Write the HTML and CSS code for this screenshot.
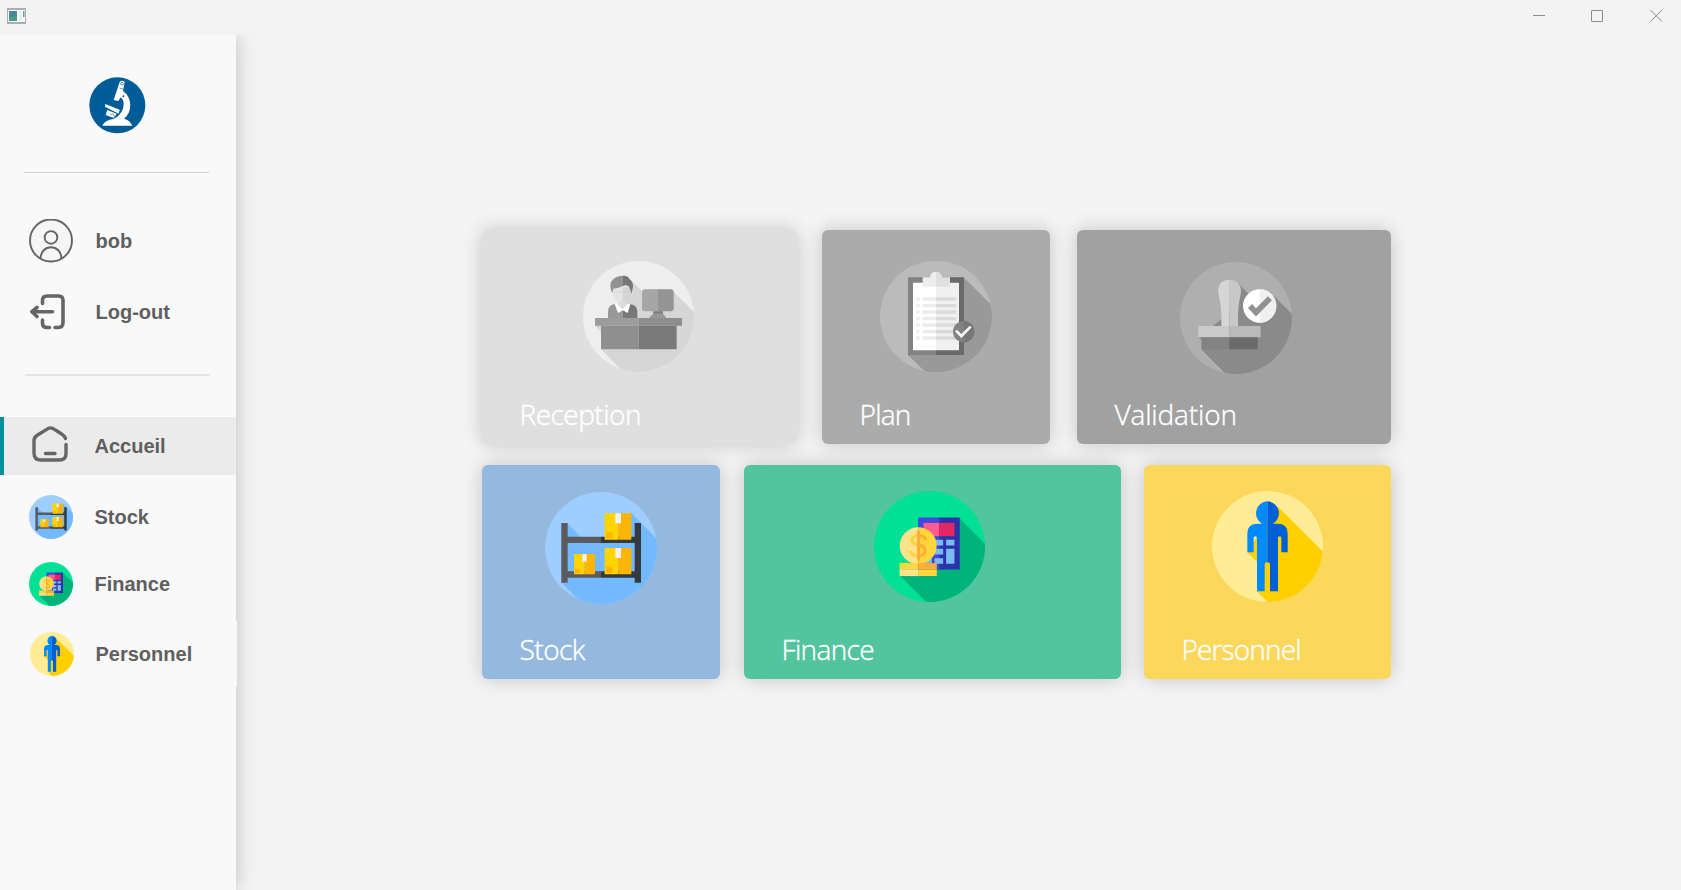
FILE: index.html
```html
<!DOCTYPE html>
<html lang="fr">
<head>
<meta charset="utf-8">
<title>Accueil</title>
<link rel="stylesheet" href="styles.css">
</head>
<body>
<svg class="defs" width="0" height="0">
  <symbol id="stock" viewBox="225 126 336 336">
    <clipPath id="c1"><circle cx="393" cy="294" r="168"/></clipPath>
    <circle cx="393" cy="294" r="168" fill="#9dceff"/>
    <g clip-path="url(#c1)"><path d="M292 220L334 262H405L484 190L640 346V500H375L275 398V220z" fill="#73b9ff"/><path d="M293 220V160H405V262H334z" fill="#9dceff"/></g>
    <path d="M293 260H393V279H293zM293 364H393V383H293zM274 219H293V398H274z" fill="#5b5b5d"/>
    <path d="M393 260H494V279H393zM393 364H494V383H393zM494 219H513V398H494z" fill="#333b41"/>
    <path d="M404 190H445V269H404zM404 294H445V373H404zM312 312H344V373H312z" fill="#ffd400"/>
    <path d="M445 190H484V269H445zM445 294H484V373H445zM344 312H375V373H344zM409 247H428V265H409zM409 350H428V369H409zM315 356H330V370H315z" fill="#ffb400"/>
    <path d="M436 190H453V220H436zM436 294H453V324H436zM337 312H350V335H337z" fill="#f5f1f5"/>
  </symbol>
  <symbol id="finance" viewBox="432 123 334 334">
    <clipPath id="c2"><circle cx="599" cy="290" r="167"/></clipPath>
    <circle cx="599" cy="290" r="167" fill="#00e196"/>
    <path clip-path="url(#c2)" d="M689 204L800 315V480H612L510 378L600 300z" fill="#00b37b"/>
    <path d="M565 203H628V359H565z" fill="#4047de"/><path d="M628 203H690V359H628z" fill="#2c32ac"/>
    <path d="M581 219H628V259H581z" fill="#ff5b90"/><path d="M628 219H674V259H628z" fill="#e22762"/>
    <path d="M610 270H640V287H610zM649 270H674V287H649zM610 297H640V314H610zM614 325H640V342H614zM649 297H674V342H649zM586 325H606V342H586z" fill="#7bbcf0"/>
    <path d="M565 232A55 55 0 0 0 565 343z" fill="#ffe38b"/><path d="M565 232A55 55 0 0 1 565 343z" fill="#ffd63c"/>
    <path d="M588 268C584 252 546 253 546 272C546 290 586 283 586 303C586 324 546 324 541 304" fill="none" stroke="#ffd23b" stroke-width="9"/>
    <path d="M565 258C577 257 586 262 588 270M565 284C580 288 586 293 586 303C586 312 576 319 565 319M566 242V333" fill="none" stroke="#ffae35" stroke-width="9"/>
    <path d="M509 340H565V359H509zM565 359H621V379H565z" fill="#ffd63c"/><path d="M509 359H565V379H509z" fill="#ffe38b"/><path d="M565 340H621V359H565z" fill="#ffae35"/>
  </symbol>
  <symbol id="personnel" viewBox="246 123 333 333">
    <clipPath id="c3"><circle cx="412.5" cy="289.500" r="166.500"/></clipPath>
    <circle cx="412.500" cy="289.500" r="166.500" fill="#ffec95"/>
    <path clip-path="url(#c3)" d="M444 170L620 346V480H438L381 424V335L352 307L400 230z" fill="#ffcf00"/>
    <path d="M412 154A36 36 0 0 0 396 221H382Q352 221 352 250V307H371V264Q371 259 376 259Q381 259 381 264V424H404V344Q404 337 412 337z" fill="#008aff"/>
    <path d="M412 154A36 36 0 0 1 429 221H443Q473 221 473 250V307H454V264Q454 259 449 259Q444 259 444 264V424H420V344Q420 337 412 337z" fill="#005fd4"/>
  </symbol>
</svg>
<header class="titlebar">
  <svg class="app-icon" width="19" height="16" viewBox="0 0 19 16"><path d="M0 0H19V16H0z" fill="#a9aeb5"/><path d="M1 2H18V14H1z" fill="#f8fafa"/><path d="M2 3H10V13H2z" fill="#4d9a86"/><path d="M2 3H10V8L2 10z" fill="#458896"/><path d="M12 3H15V13H12z" fill="#ebeeee"/><path d="M16 3H17.500V9H16z" fill="#5aa59c"/></svg>
  <svg class="controls" width="181" height="30" viewBox="0 0 181 30" fill="none" stroke="#8c8c8c"><path d="M33 15.500H45"/><rect x="91.500" y="10.500" width="11" height="11" rx=".5"/><path d="M150.500 10L162 21.500M162 10L150.500 21.500"/></svg>
</header>
<div class="body">
  <nav class="sidebar">
    <svg class="logo" width="57" height="57" viewBox="267 232 171 171"><circle cx="352" cy="317" r="84" fill="#005c96"/><g fill="#fff"><path d="M359 247Q366 240 374 247L369 274Q389 288 391 315Q391 341 372 357Q390 362 397 378H307Q315 361 340 358Q360 350 369 327Q375 303 362 293L355 304L341 301z"/><path d="M316 313L359 330L356 342L315 321z"/><path d="M322 331L350 342L341 355L317 346z"/></g><g fill="none" stroke="#005c96" stroke-width="2"><circle cx="366" cy="252" r="4"/><path d="M359 265L371 269M331 345Q338 339 344 349"/></g><circle cx="370" cy="290" r="3" fill="#005c96"/></svg>
    <hr class="rule">
    <a class="item user"><svg width="44" height="44" viewBox="0 0 44 44" fill="none" stroke="#646464" stroke-width="1.900"><circle cx="22" cy="21.500" r="21" fill="#f5f5f5"/><circle cx="22" cy="18.400" r="6.300"/><path d="M11.700 39.500V38.500A10.300 10.300 0 0 1 32.300 38.500V39.500"/></svg><span>bob</span></a>
    <a class="item logout"><svg width="44" height="44" viewBox="0 0 44 44" fill="none" stroke="#666" stroke-width="3.600" stroke-linecap="round" stroke-linejoin="round"><path d="M13.500 13.500V10.500Q13.500 6 18 6H29.500Q34 6 34 10.500V32.500Q34 37.500 29 37.500H26M13.500 30V33Q13.500 37.500 18 37.500H20.500M23.500 21.700H3"/><path d="M8 17.500L3 21.700L8 26.500"/></svg><span>Log-out</span></a>
    <hr class="rule second">
    <a class="item active"><svg width="44" height="44" viewBox="0 0 44 44" fill="none" stroke="#666" stroke-width="3.400" stroke-linecap="round" stroke-linejoin="round"><path d="M36.500 18.500C35.500 15 31.500 13.500 28 11L24 8.600Q21.500 7.200 19 8.600L8.500 15Q5 17 5 21V33Q5 40 12 40H30Q37 40 37 34V24.500M16.500 33.500H26"/></svg><span>Accueil</span></a>
    <a class="item stock"><svg width="44" height="44"><use href="#stock"/></svg><span>Stock</span></a>
    <a class="item finance"><svg width="44" height="44"><use href="#finance"/></svg><span>Finance</span></a>
    <a class="item personnel"><svg width="44" height="44"><use href="#personnel"/></svg><span>Personnel</span></a>
  </nav>
  <main class="main">
    <div class="row">
      <section class="card c-reception">
        <svg width="111" height="111" viewBox="339 138 333 333"><clipPath id="c4"><circle cx="505.500" cy="304.500" r="166.500"/></clipPath><circle cx="505.500" cy="304.500" r="166.500" fill="#eee"/><path clip-path="url(#c4)" d="M480 193L518 230L608 228L700 319V490H480L393 403V350L376 333L440 290z" fill="#d6d6d6"/>
          <path d="M427 217L487 212V242Q482 266 458 268Q433 266 429 238z" fill="#e5e5e5"/><path d="M458 217H485V242Q481 266 458 268z" fill="#d3d3d3"/><path d="M432 231L457 229V231L434 233zM461 229H479V231H461z" fill="#cecece"/><path d="M427 235Q413 206 431 191Q442 182 459 182V213Q441 222 431 220z" fill="#929292"/><path d="M459 182Q475 181 479 193Q492 203 488 220L485 236L478 216Q470 207 459 213z" fill="#777"/>
          <path d="M414 309V289Q414 268 438 267L458 276V309z" fill="#989898"/><path d="M458 309V276L478 267Q502 270 502 289V309z" fill="#777"/><path d="M434 267H442L458 281L472 267H481L473 294L458 286L444 294z" fill="#fff"/><path d="M446 257H470V270L458 281L446 270z" fill="#ddd"/>
          <path d="M525 223H564V289H525Q516 289 516 280V232Q516 223 525 223z" fill="#a6a6a6"/><path d="M564 223H602Q611 223 611 232V280Q611 289 602 289H564z" fill="#949494"/><path d="M550 289H579V296L588 307V310H539V306L550 296z" fill="#989898"/><path d="M550 289H579V296H550z" fill="#7e7e7e"/>
          <path d="M375 309H506V332H375z" fill="#9c9c9c"/><path d="M506 309H636V332H506z" fill="#8d8d8d"/><path d="M393 332H506V403H393z" fill="#8f8f8f"/><path d="M506 332H620V403H506z" fill="#797979"/></svg>
        <h2>Reception</h2>
      </section>
      <section class="card c-plan">
        <svg width="112" height="112" viewBox="210 138 336 336"><clipPath id="c5"><ellipse cx="378" cy="304.500" rx="168" ry="167"/></clipPath><ellipse cx="378" cy="304.500" rx="168" ry="167" fill="#bbb"/><path clip-path="url(#c5)" d="M462 188L560 286V480H355L294 420z" fill="#999"/>
          <path d="M294 187H378V420H294z" fill="#838383"/><path d="M378 187H462V420H378z" fill="#696969"/><path d="M309 203H378V406H309z" fill="#fff"/><path d="M378 203H447V406H378z" fill="#f0f0f0"/>
          <path d="M338 252H378M338 272H378M338 291H378M338 311H378M338 330H378M338 350H378M338 369H378M319 252H329M319 272H329M319 291H329M319 311H329M319 330H329M319 350H329M319 369H329" stroke="#ececec" stroke-width="10"/><path d="M378 252H438M378 272H438M378 291H438M378 311H438M378 330H438M378 350H438M378 369H438" stroke="#dadada" stroke-width="10"/>
          <path d="M338 187H360Q362 170 378 170V215H338z" fill="#eee"/><path d="M378 170Q394 170 397 187H420V215H378z" fill="#e0e0e0"/><circle cx="461" cy="350" r="32" fill="#838383"/><path d="M461 318A32 32 0 0 1 461 382z" fill="#777"/><path d="M438 347L454 363L482 335" fill="none" stroke="#f4f4f4" stroke-width="8"/></svg>
        <h2>Plan</h2>
      </section>
      <section class="card c-validation">
        <svg width="112" height="112" viewBox="360 141 336 336"><clipPath id="c6"><circle cx="528" cy="309" r="168"/></clipPath><circle cx="528" cy="309" r="168" fill="#afafaf"/><path clip-path="url(#c6)" d="M536 207L570 241L643 244L720 321V490H510L425 404V376L416 367L500 300z" fill="#8a8a8a"/>
          <path d="M508 194Q474 196 474 230L481 265Q484 280 484 333H508z" fill="#d5d5d5"/><path d="M508 194Q543 196 543 230L537 265Q534 280 534 333H508z" fill="#c8c8c8"/><path d="M415 333H508V367H415z" fill="#cacaca"/><path d="M508 333H602V367H508z" fill="#bababa"/><path d="M425 367H508V403H425z" fill="#838383"/><path d="M508 367H593V403H508z" fill="#6a6a6a"/>
          <circle cx="599" cy="273" r="50" fill="#fff"/><path d="M599 223A50 50 0 0 1 599 323z" fill="#f0f0f0"/><path d="M570 273L588 292L630 250" fill="none" stroke="#929292" stroke-width="17"/></svg>
        <h2>Validation</h2>
      </section>
    </div>
    <div class="row">
      <section class="card c-stock"><svg width="112" height="112"><use href="#stock"/></svg><h2>Stock</h2></section>
      <section class="card c-finance"><svg width="111" height="111"><use href="#finance"/></svg><h2>Finance</h2></section>
      <section class="card c-personnel"><svg width="111" height="111"><use href="#personnel"/></svg><h2>Personnel</h2></section>
    </div>
  </main>
</div>
</body>
</html>
```
FILE: styles.css
```css
* { box-sizing: border-box; }
body { margin: 0; height: 890px; background: #f4f4f4; overflow: hidden; display: flex; flex-direction: column; }
svg { display: block; flex: none; }
.defs { position: absolute; }
.titlebar { height: 35px; flex: none; display: flex; justify-content: space-between; background: #f3f3f3; }
.app-icon { margin: 8px 0 0 7px; }
.body { flex: 1; display: flex; overflow: hidden; }
.sidebar { width: 236px; flex: none; background: #f9f9f9; box-shadow: 0 0 20px rgba(0,0,0,.22); padding-top: 42px; display: flex; flex-direction: column; }
.logo { margin-left: 89px; }
.rule { border: 0; height: 1px; width: 185px; flex: none; margin: 38px 0 0 24px; background: #d3d3d3; }
.rule.second { height: 2px; margin: 40px 0 0 25px; background: #e4e4e4; }
.item { height: 44px; flex: none; display: flex; align-items: center; gap: 21.5px; padding-left: 29px; color: #5f5f5f; font: bold 20px/22px "Liberation Sans", Arial, sans-serif; }
.user { margin-top: 46px; gap: 22.5px; }
.logout { margin-top: 27px; gap: 22.5px; }
.active { height: 58px; margin-top: 41px; padding-left: 25px; border-left: 4px solid #00909b; background: #ebebeb; }
.active svg { margin-top: -8px; }
.stock { margin-top: 20px; }
.finance { margin-top: 23px; }
.personnel { margin-top: 15px; height: 65px; width: 237px; padding-left: 30px; background: #f9f9f9; }
.main { flex: 1; display: flex; flex-direction: column; gap: 21px; padding: 195px 0 0 246px; }
.row { display: flex; height: 214px; }
.card { display: flex; flex-direction: column; justify-content: space-between; border-radius: 6px; box-shadow: 0 0 20px rgba(0,0,0,.2); padding: 31px 0 11px 37.5px; }
.card h2 { margin: 0; color: #fff; font: 300 28px/38px "Open Sans", "Noto Sans", sans-serif; letter-spacing: -.5px; -webkit-text-stroke: .4px #fff; white-space: nowrap; }
.c-reception { width: 315px; margin-right: 25px; background: #dfdfdf; }
.c-reception svg { margin-left: 63.5px; }
.c-plan { width: 228px; margin-right: 27px; background: #ababab; }
.c-plan svg { margin-left: 20.5px; }
.card.c-plan h2 { letter-spacing: -.75px; }
.c-validation { width: 314px; background: #a1a1a1; padding-top: 32px; }
.c-validation svg { margin-left: 65.5px; }
.card.c-validation h2 { letter-spacing: -.15px; }
.c-stock { width: 238px; margin-right: 24px; background: #95b9de; padding-top: 27px; }
.c-stock svg { margin-left: 25.5px; }
.c-finance { width: 377px; margin-right: 23px; background: #52c49e; padding-top: 26px; }
.c-finance svg { margin-left: 92.5px; }
.card.c-finance h2 { letter-spacing: -.65px; }
.c-personnel { width: 247px; background: #fbd75c; padding-top: 26px; }
.c-personnel svg { margin-left: 30.5px; }
.card.c-personnel h2 { letter-spacing: -.85px; }
```
